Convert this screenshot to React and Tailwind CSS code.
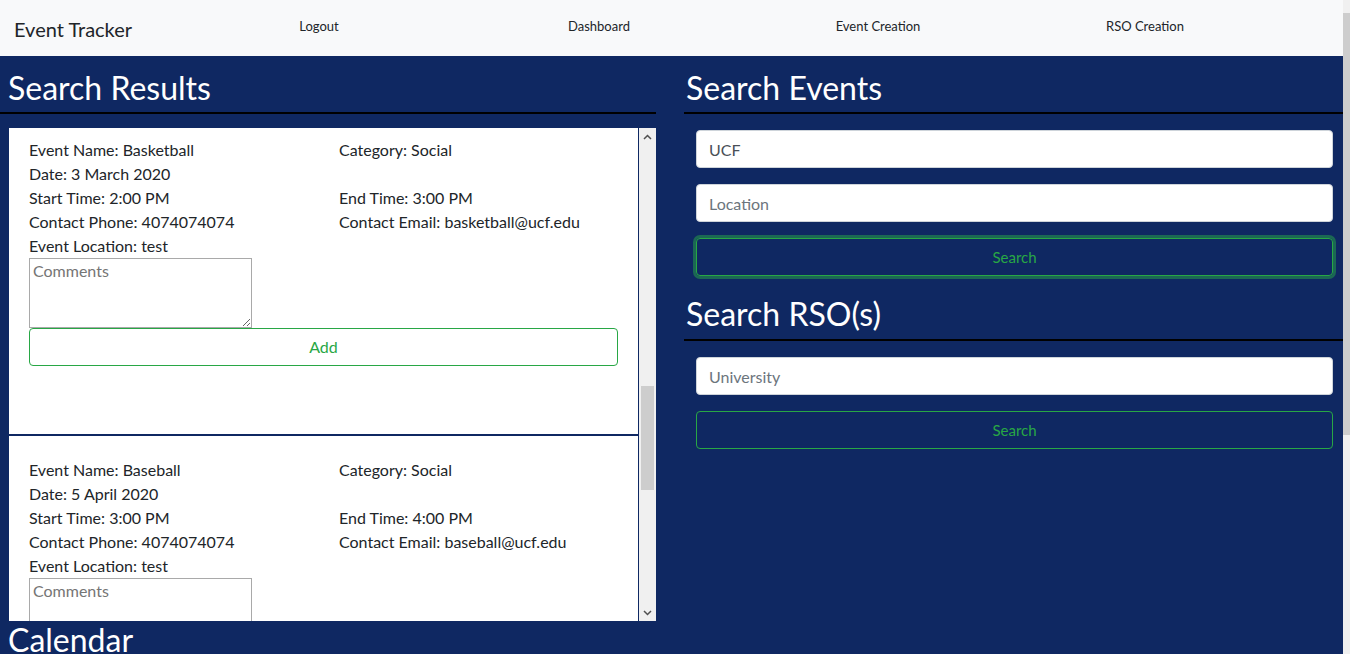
import React from 'react';

const NAVY = 'bg-[#0f2862]';

const events = [
  {
    name: 'Basketball',
    date: '3 March 2020',
    start: '2:00 PM',
    end: '3:00 PM',
    phone: '4074074074',
    email: 'basketball@ucf.edu',
    location: 'test',
  },
  {
    name: 'Baseball',
    date: '5 April 2020',
    start: '3:00 PM',
    end: '4:00 PM',
    phone: '4074074074',
    email: 'baseball@ucf.edu',
    location: 'test',
  },
];

const Heading = ({ children, className = '' }) => (
  <div className={`border-b-2 border-black text-[32px] leading-[38px] text-white ${className}`}>
    {children}
  </div>
);

const EventCard = ({ ev, first }) => (
  <div
    className={`border-b-2 border-[#0f2862] px-[20px] ${first ? 'pt-[10px] h-[308px]' : 'pt-[22px]'}`}
  >
    <div className="grid grid-cols-[310px_1fr] text-[16px] leading-[24px] text-[#212529]">
      <div>Event Name: {ev.name}</div>
      <div>Category: Social</div>
      <div>Date: {ev.date}</div>
      <div></div>
      <div>Start Time: {ev.start}</div>
      <div>End Time: {ev.end}</div>
      <div>Contact Phone: {ev.phone}</div>
      <div>Contact Email: {ev.email}</div>
      <div>Event Location: {ev.location}</div>
    </div>
    <textarea
      placeholder="Comments"
      className="block w-[223px] h-[70px] border border-[#a9a9a9] px-[3px] py-[2px] text-[16px] leading-[20px] placeholder:text-[#757575] outline-none"
    />
    {first && (
      <button className="block w-full h-[38px] rounded-[4px] border border-[#28a745] text-[16px] text-[#28a745] bg-white">
        Add
      </button>
    )}
  </div>
);

const Chevron = ({ up }) => (
  <svg width="9" height="6" viewBox="0 0 9 6" className="text-[#505050]">
    <path d={up ? 'M1 5 L4.5 1.5 L8 5' : 'M1 1 L4.5 4.5 L8 1'} fill="none" stroke="currentColor" strokeWidth="1.5" />
  </svg>
);

const InnerScrollbar = () => (
  <div className="w-[17px] shrink-0 bg-[#f0f0f0] flex flex-col items-center">
    <div className="h-[17px] flex items-center justify-center">
      <Chevron up />
    </div>
    <div className="flex-1 w-full pt-[241px] px-[2px]">
      <div className="h-[104px] bg-[#cdcdcd]"></div>
    </div>
    <div className="h-[17px] flex items-center justify-center">
      <Chevron />
    </div>
  </div>
);

const Field = ({ value, placeholder }) => (
  <input
    readOnly
    value={value}
    placeholder={placeholder}
    className="block w-full h-[38px] rounded-[4px] border border-[#ced4da] bg-white px-[12px] text-[16px] text-[#495057] placeholder:text-[#6c757d] outline-none"
  />
);

const SearchButton = ({ focused }) => (
  <button
    className={`block w-full h-[38px] rounded-[4px] border border-[#28a745] text-[15px] text-[#28a745] ${focused ? 'shadow-[0_0_0_3px_rgba(40,167,69,0.5)]' : ''}`}
  >
    Search
  </button>
);

export default function App() {
  return (
    <div className={`h-[654px] overflow-hidden flex ${NAVY} font-['Lato','Liberation_Sans',sans-serif]`}>
      <div className="w-[1343px] shrink-0">
        {/* Navbar */}
        <nav className="h-[56px] bg-[#f8f9fa] flex items-center text-[#212529]">
          <div className="w-[179px] pl-[14px] pt-[2px] text-[20px]">Event Tracker</div>
          <div className="flex text-[13px] -mt-[3px]">
            <a className="w-[280px] text-center">Logout</a>
            <a className="w-[280px] text-center">Dashboard</a>
            <a className="w-[278px] text-center">Event Creation</a>
            <a className="w-[256px] text-center">RSO Creation</a>
          </div>
        </nav>

        <div className="flex">
          {/* Search results */}
          <div className="w-[656px] shrink-0">
            <Heading className="pt-[13px] pb-[5px] pl-[8px]">Search Results</Heading>
            <div className="ml-[8px] mt-[14px] h-[493px] flex overflow-hidden">
              <div className="flex-1 bg-white border-l border-r border-[#0f2862] overflow-hidden">
                {events.map((ev, i) => (
                  <EventCard key={ev.name} ev={ev} first={i === 0} />
                ))}
              </div>
              <InnerScrollbar />
            </div>
          </div>

          {/* Search forms */}
          <div className="ml-[28px] flex-1">
            <Heading className="pt-[13px] pb-[5px] pl-[2px]">Search Events</Heading>
            <div className="ml-[12px] mr-[10px] mt-[16px] flex flex-col gap-[16px]">
              <Field value="UCF" />
              <Field placeholder="Location" />
              <SearchButton focused />
            </div>
            <Heading className="mt-[19px] pb-[6px] pl-[2px]">Search RSO(s)</Heading>
            <div className="ml-[12px] mr-[10px] mt-[16px] flex flex-col gap-[16px]">
              <Field placeholder="University" />
              <SearchButton />
            </div>
          </div>
        </div>

        <div className="pl-[8px] text-[32px] leading-[38px] text-white">Calendar</div>
      </div>

      {/* Page scrollbar */}
      <div className="flex-1 bg-[#f0f0f0] flex flex-col">
        <div className="h-[13px]"></div>
        <div className="h-[422px] bg-[#cdcdcd]"></div>
      </div>
    </div>
  );
}
